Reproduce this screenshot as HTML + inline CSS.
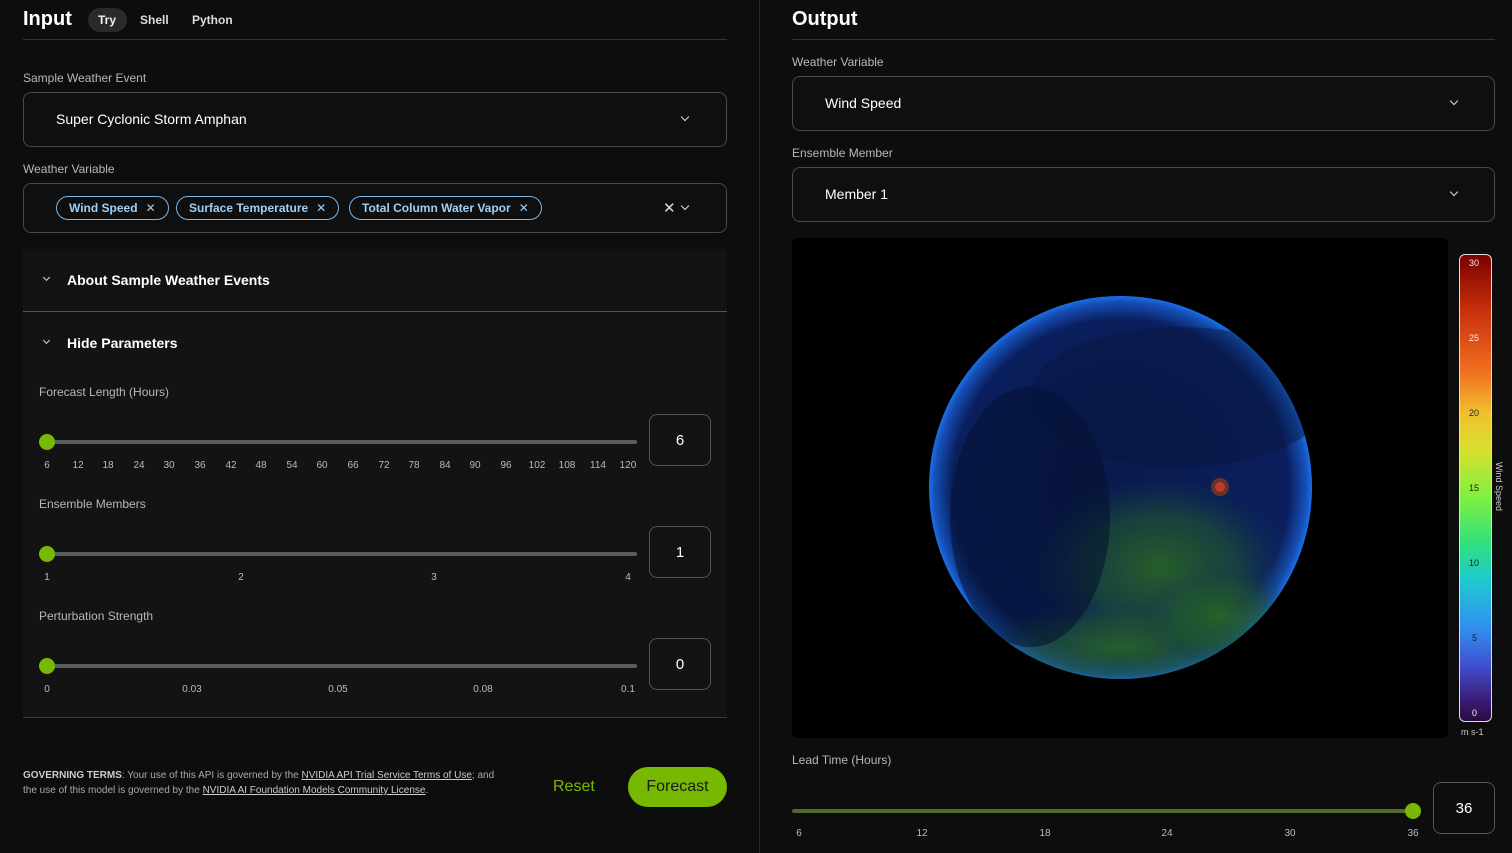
<!DOCTYPE html>
<html><head><meta charset="utf-8"><style>
*{box-sizing:border-box;margin:0;padding:0}
body{width:1512px;height:853px;background:#0d0d0d;font-family:"Liberation Sans",sans-serif;color:#eee;position:relative;overflow:hidden}
.a{position:absolute}
.lbl{font-size:12px;color:#b8b8b8}
.box{border:1px solid #4a4a4a;border-radius:8px;background:#0f0f0f}
.chip{position:absolute;top:196px;height:24px;border:1px solid #7bb4e6;border-radius:12px;color:#9fcff5;font-size:12px;font-weight:bold;padding:4px 12px;white-space:nowrap}
.chip i{font-style:normal;font-weight:normal;margin-left:8px}
.tick{position:absolute;font-size:10px;color:#bbb;transform:translateX(-50%)}
.track{position:absolute;height:4px;background:#5c5c5c;border-radius:2px}
.thumb{position:absolute;width:16px;height:16px;border-radius:50%;background:#76b900}
.num{position:absolute;width:62px;height:52px;border:1px solid #555;border-radius:8px;font-size:15px;display:flex;align-items:center;justify-content:center;color:#fff}
.chev{position:absolute;width:7px;height:7px;border-right:1.5px solid #ddd;border-bottom:1.5px solid #ddd;transform:rotate(45deg)}
</style></head><body>
<div class="a" style="left:23px;top:8px;font-size:20px;font-weight:bold;color:#fff">Input</div>
<div class="a" style="left:88px;top:8px;width:39px;height:24px;border-radius:12px;background:#2a2a2a"></div>
<div class="a" style="left:98px;top:13px;font-size:12px;font-weight:bold">Try</div>
<div class="a" style="left:140px;top:13px;font-size:12px;font-weight:bold;color:#ddd">Shell</div>
<div class="a" style="left:192px;top:13px;font-size:12px;font-weight:bold;color:#ddd">Python</div>
<div class="a" style="left:23px;top:39px;width:704px;height:1px;background:#333"></div>
<div class="a" style="left:759px;top:0;width:1px;height:853px;background:#2a2a2a"></div>

<div class="a lbl" style="left:23px;top:71px">Sample Weather Event</div>
<div class="a box" style="left:23px;top:92px;width:704px;height:55px"></div>
<div class="a" style="left:56px;top:111px;font-size:14px;color:#fff">Super Cyclonic Storm Amphan</div>
<div class="chev" style="left:682px;top:114px;width:6px;height:6px"></div>

<div class="a lbl" style="left:23px;top:162px">Weather Variable</div>
<div class="a box" style="left:23px;top:183px;width:704px;height:50px"></div>
<div class="chip" style="left:56px">Wind Speed<i>✕</i></div>
<div class="chip" style="left:176px">Surface Temperature<i>✕</i></div>
<div class="chip" style="left:349px">Total Column Water Vapor<i>✕</i></div>
<div class="a" style="left:663px;top:199px;font-size:15px;color:#ddd">✕</div>
<div class="chev" style="left:682px;top:203px;width:6px;height:6px"></div>

<div class="a" style="left:23px;top:249px;width:704px;height:469px;background:#131313;border-bottom:1px solid #3a3a3a"></div>
<div class="a" style="left:23px;top:311px;width:704px;height:1px;background:#555"></div>
<div class="chev" style="left:44px;top:275px;width:5px;height:5px"></div>
<div class="a" style="left:67px;top:272px;font-size:14px;font-weight:bold;color:#fff">About Sample Weather Events</div>
<div class="chev" style="left:44px;top:338px;width:5px;height:5px"></div>
<div class="a" style="left:67px;top:335px;font-size:14px;font-weight:bold;color:#fff">Hide Parameters</div>

<div class="a lbl" style="left:39px;top:385px">Forecast Length (Hours)</div>
<div class="track" style="left:47px;top:440px;width:590px"></div>
<div class="thumb" style="left:39px;top:434px"></div>
<div class="num" style="left:649px;top:414px">6</div>

<div class="a lbl" style="left:39px;top:497px">Ensemble Members</div>
<div class="track" style="left:47px;top:552px;width:590px"></div>
<div class="thumb" style="left:39px;top:546px"></div>
<div class="num" style="left:649px;top:526px">1</div>
<div class="tick" style="left:47px;top:572px">1</div><div class="tick" style="left:241px;top:572px">2</div><div class="tick" style="left:434px;top:572px">3</div><div class="tick" style="left:628px;top:572px">4</div>

<div class="a lbl" style="left:39px;top:609px">Perturbation Strength</div>
<div class="track" style="left:47px;top:664px;width:590px"></div>
<div class="thumb" style="left:39px;top:658px"></div>
<div class="num" style="left:649px;top:638px">0</div>
<div class="tick" style="left:47px;top:684px">0</div><div class="tick" style="left:192px;top:684px">0.03</div><div class="tick" style="left:338px;top:684px">0.05</div><div class="tick" style="left:483px;top:684px">0.08</div><div class="tick" style="left:628px;top:684px">0.1</div>

<div class="a" style="left:23px;top:768px;width:520px;font-size:10px;line-height:15px;color:#aaa;white-space:nowrap"><b style="color:#ccc">GOVERNING TERMS</b>: Your use of this API is governed by the <u style="color:#ccc">NVIDIA API Trial Service Terms of Use</u>; and<br>the use of this model is governed by the <u style="color:#ccc">NVIDIA AI Foundation Models Community License</u>.</div>
<div class="a" style="left:553px;top:778px;font-size:16px;color:#76b900">Reset</div>
<div class="a" style="left:628px;top:767px;width:99px;height:40px;border-radius:20px;background:#76b900;color:#1a1a1a;font-size:16px;display:flex;align-items:center;justify-content:center">Forecast</div>

<div class="a" style="left:792px;top:8px;font-size:20px;font-weight:bold;color:#fff">Output</div>
<div class="a" style="left:792px;top:39px;width:703px;height:1px;background:#333"></div>
<div class="a lbl" style="left:792px;top:55px">Weather Variable</div>
<div class="a box" style="left:792px;top:76px;width:703px;height:55px"></div>
<div class="a" style="left:825px;top:95px;font-size:14px;color:#fff">Wind Speed</div>
<div class="chev" style="left:1451px;top:98px;width:6px;height:6px"></div>
<div class="a lbl" style="left:792px;top:146px">Ensemble Member</div>
<div class="a box" style="left:792px;top:167px;width:703px;height:55px"></div>
<div class="a" style="left:825px;top:186px;font-size:14px;color:#fff">Member 1</div>
<div class="chev" style="left:1451px;top:189px;width:6px;height:6px"></div>

<div class="a" style="left:792px;top:238px;width:656px;height:500px;background:#000;border-radius:6px"></div>
<svg class="a" style="left:920px;top:287px" width="402" height="402">
<defs>
<radialGradient id="g" cx="0.5" cy="0.5" r="0.5"><stop offset="0" stop-color="#0a1a4c"/><stop offset="0.88" stop-color="#0b1f5e"/><stop offset="0.97" stop-color="#1550b8"/><stop offset="1" stop-color="#1a70e8"/></radialGradient>
<radialGradient id="gr" cx="0.5" cy="0.5" r="0.5"><stop offset="0" stop-color="#2c6a22" stop-opacity="0.85"/><stop offset="0.6" stop-color="#1f5530" stop-opacity="0.6"/><stop offset="1" stop-color="#143a50" stop-opacity="0"/></radialGradient>
<clipPath id="c"><circle cx="200.5" cy="200.5" r="191.5"/></clipPath>
</defs>
<circle cx="200.5" cy="200.5" r="191.5" fill="url(#g)"/>
<g clip-path="url(#c)">
<ellipse cx="240" cy="280" rx="130" ry="90" fill="url(#gr)"/>
<ellipse cx="200" cy="360" rx="150" ry="45" fill="url(#gr)"/>
<ellipse cx="300" cy="330" rx="80" ry="50" fill="url(#gr)"/>
<ellipse cx="110" cy="230" rx="80" ry="130" fill="#06112e" opacity="0.55"/>
<ellipse cx="260" cy="110" rx="150" ry="70" fill="#07143a" opacity="0.45"/>
<circle cx="300" cy="200" r="9" fill="#7a3a20" opacity="0.8"/>
<circle cx="300" cy="200" r="5" fill="#c0392b"/>
</g>
</svg>
<div class="a" style="left:1459px;top:254px;width:33px;height:468px;border:1.5px solid #ddd;border-radius:6px;background:linear-gradient(#7a0000,#c9300c 12%,#f07020 25%,#f0c030 34%,#d8e030 42%,#80f040 52%,#30e080 62%,#20c8d0 70%,#3090f0 80%,#4050d0 88%,#3a1a70 96%,#2a0a40)"></div>
<div class="a" style="font-size:9px;color:#eee;left:1469px;top:258px">30</div>
<div class="a" style="font-size:9px;color:#eee;left:1469px;top:333px">25</div>
<div class="a" style="font-size:9px;color:#222;left:1469px;top:408px">20</div>
<div class="a" style="font-size:9px;color:#222;left:1469px;top:483px">15</div>
<div class="a" style="font-size:9px;color:#222;left:1469px;top:558px">10</div>
<div class="a" style="font-size:9px;color:#222;left:1472px;top:633px">5</div>
<div class="a" style="font-size:9px;color:#eee;left:1472px;top:708px">0</div>
<div class="a" style="font-size:9px;color:#ccc;left:1461px;top:727px">m s-1</div>
<div class="a" style="font-size:9px;color:#ccc;top:462px;transform:rotate(90deg);transform-origin:0 0;white-space:nowrap;left:1504px">Wind Speed</div>

<div class="a lbl" style="left:792px;top:753px">Lead Time (Hours)</div>
<div class="track" style="left:792px;top:809px;width:621px;background:#4f6a2a"></div>
<div class="thumb" style="left:1405px;top:803px"></div>
<div class="num" style="left:1433px;top:782px">36</div>
<div class="tick" style="left:799px;top:828px">6</div><div class="tick" style="left:922px;top:828px">12</div><div class="tick" style="left:1045px;top:828px">18</div><div class="tick" style="left:1167px;top:828px">24</div><div class="tick" style="left:1290px;top:828px">30</div><div class="tick" style="left:1413px;top:828px">36</div>

<div class="tick" style="left:47px;top:460px">6</div><div class="tick" style="left:78px;top:460px">12</div><div class="tick" style="left:108px;top:460px">18</div><div class="tick" style="left:139px;top:460px">24</div><div class="tick" style="left:169px;top:460px">30</div><div class="tick" style="left:200px;top:460px">36</div><div class="tick" style="left:231px;top:460px">42</div><div class="tick" style="left:261px;top:460px">48</div><div class="tick" style="left:292px;top:460px">54</div><div class="tick" style="left:322px;top:460px">60</div><div class="tick" style="left:353px;top:460px">66</div><div class="tick" style="left:384px;top:460px">72</div><div class="tick" style="left:414px;top:460px">78</div><div class="tick" style="left:445px;top:460px">84</div><div class="tick" style="left:475px;top:460px">90</div><div class="tick" style="left:506px;top:460px">96</div><div class="tick" style="left:537px;top:460px">102</div><div class="tick" style="left:567px;top:460px">108</div><div class="tick" style="left:598px;top:460px">114</div><div class="tick" style="left:628px;top:460px">120</div>
</body></html>
